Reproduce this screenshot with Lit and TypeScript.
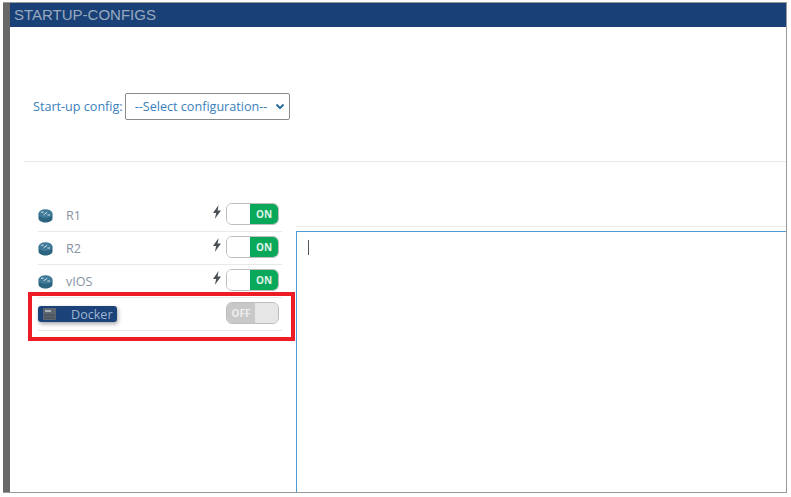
import { LitElement, html, css } from "lit";
import { customElement } from "lit/decorators.js";

const routerIcon = html`<svg class="icon" width="15" height="14" viewBox="0 0 15 14">
  <path d="M0.5 4.5v5c0 2.3 3.1 4 7 4s7-1.7 7-4v-5z" fill="#2c6480"/>
  <ellipse cx="7.5" cy="4.6" rx="7" ry="4.3" fill="#3f7a98"/>
  <path d="M3 3.2h2.6M9.4 6h2.6M5.6 6 9.2 3.2" stroke="#d5e3ea" stroke-width="1" fill="none"/>
</svg>`;

const bolt = html`<svg class="bolt" width="10" height="14" viewBox="0 0 10 14">
  <path d="M6.6 0 1 8h3.2L2.8 14 9 5.4H5.6z" fill="#4a5058"/>
</svg>`;

@customElement("app-root")
export class AppRoot extends LitElement {
  static styles = css`
    :host { display: block; width: 791px; height: 497px; background: #fff; overflow: hidden; position: relative; font-family: "Open Sans", sans-serif; }
    .frame { box-sizing: border-box; width: 784px; height: 491px; margin: 2px 0 0 3px; display: flex; border: 1px solid #999; border-left: 0; }
    .strip { width: 7px; background: #686868; flex: none; }
    .panel { flex: 1; min-width: 0; display: flex; flex-direction: column; }
    .title { height: 24px; flex: none; box-sizing: border-box; padding-left: 4px; background: #1a4177; color: #98aabf; font: 15px/24px "Liberation Sans", sans-serif; }
    .config { height: 135px; flex: none; box-sizing: border-box; margin-left: 14px; border-bottom: 1px solid #e9e9e9; padding: 66px 0 0 9px; display: flex; align-items: flex-start; gap: 2px; }
    .config label { font-size: 12.6px; line-height: 27px; color: #3a7fbd; }
    .select { box-sizing: border-box; width: 165px; height: 27px; border: 1px solid #8a8a8a; border-radius: 2px; display: flex; align-items: center; justify-content: space-between; padding: 0 4px 0 9px; font-size: 12.6px; color: #3a7fbd; }
    .body { flex: 1; display: flex; min-height: 0; }
    .list { width: 244px; flex: none; margin: 37px 0 0 28px; }
    .row { box-sizing: border-box; height: 33px; border-bottom: 1px solid #e9e9e9; display: flex; align-items: center; font-size: 12.6px; color: #8793a3; }
    .icon { margin-right: 13px; flex: none; margin-top: 1px; }
    .name { flex: 1; }
    .bolt { margin-right: 4px; margin-bottom: 7px; }
    .switch { box-sizing: border-box; width: 53px; height: 22px; margin-right: 3px; margin-bottom: 3px; border: 1px solid #bdbdbd; border-radius: 6px; display: flex; overflow: hidden; font-size: 10px; font-weight: 700; line-height: 20px; }
    .blank { flex: 1; background: #fff; }
    .on { width: 28px; flex: none; background: #09a85b; color: #dff3e8; text-align: center; }
    .off-wrap { background: #e6e6e6; }
    .off { width: 28px; flex: none; background: #c8c8c8; color: #eee; text-align: center; }
    .chip { display: flex; align-items: center; width: 79px; height: 16px; border-radius: 3px; background: #1b4279; color: #9fb7d0; box-shadow: 1px 2px 4px rgba(0,0,0,.35); font-size: 12.6px; }
    .chip svg { margin: 0 14px 0 4px; flex: none; }
    .spacer { flex: 1; }
    .editor { flex: 1; margin: 64px 0 0 14px; border-top: 1px solid #e9e9e9; padding-top: 4px; display: flex; min-width: 0; }
    .area { flex: 1; border: 1px solid #4d9bcd; border-width: 1px 0 0 1px; padding: 8px 0 0 11px; }
    .caret { width: 1px; height: 15px; background: #555; }
    .mark { position: absolute; left: 28px; top: 292px; width: 267px; height: 49px; box-sizing: border-box; border: 4px solid #ee1c25; pointer-events: none; }
  `;

  private row(name: string) {
    return html`<div class="row">${routerIcon}<span class="name">${name}</span>${bolt}
      <div class="switch"><span class="blank"></span><span class="on">ON</span></div></div>`;
  }

  render() {
    return html`
      <div class="frame">
        <div class="strip"></div>
        <div class="panel">
          <div class="title">STARTUP-CONFIGS</div>
          <div class="config">
            <label>Start-up config:</label>
            <div class="select"><span>--Select configuration--</span>
              <svg width="10" height="7" viewBox="0 0 10 7"><path d="M1.5 1.5 5 5l3.5-3.5" fill="none" stroke="#2f6f9f" stroke-width="2"/></svg>
            </div>
          </div>
          <div class="body">
            <div class="list">
              ${this.row("R1")}${this.row("R2")}${this.row("vIOS")}
              <div class="row">
                <div class="chip">
                  <svg width="15" height="14" viewBox="0 0 15 14"><rect x="1" y="1" width="13" height="12" rx="1" fill="#5d6670"/><rect x="3" y="3" width="6" height="2" fill="#a9afb5"/><path d="M2 8h11M2 11h11" stroke="#3e454c"/></svg>
                  Docker
                </div>
                <span class="spacer"></span>
                <div class="switch off-wrap"><span class="off">OFF</span><span class="blank off-wrap"></span></div>
              </div>
            </div>
            <div class="editor"><div class="area"><div class="caret"></div></div></div>
          </div>
        </div>
      </div>
      <div class="mark"></div>
    `;
  }
}
